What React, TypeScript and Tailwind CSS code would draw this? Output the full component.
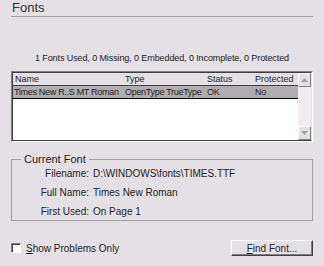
import * as React from 'react';

const rows = [
    { name: 'Times New R..S MT Roman', type: 'OpenType TrueType', status: 'OK', prot: 'No' },
];

function Arrow({ up }: { up?: boolean }) {
    return (
        <svg width="7" height="4" viewBox="0 0 7 4">
            <path d={up ? 'M3.5 0 L7 4 L0 4 Z' : 'M0 0 L7 0 L3.5 4 Z'} fill="#a0a0a0" />
        </svg>
    );
}

function ScrollButton({ up }: { up?: boolean }) {
    return (
        <div className="flex h-[14px] w-[13px] items-center justify-center border border-t-white border-l-white border-r-[#808080] border-b-[#808080] bg-[#e5e0e5]">
            <Arrow up={up} />
        </div>
    );
}

export default function App() {
    return (
        <div className="h-[266px] w-[324px] bg-[#e5e0e5] px-[11px] font-['Liberation_Sans',sans-serif] text-[11px] leading-[13px] text-[#222]">
            <div className="border-b border-[#a0a0a0] pt-[2px] pb-[2px] pl-[1px] text-[13px] leading-[12px] text-[#333]">Fonts</div>

            <div className="mt-[35px] text-center text-[9px] leading-[13px] tracking-[-0.1px]">
                1 Fonts Used, 0 Missing, 0 Embedded, 0 Incomplete, 0 Protected
            </div>

            <div className="mt-[6px] flex h-[71px] border border-t-[#808080] border-l-[#808080] border-r-white border-b-white">
                <div className="flex flex-1 border border-t-[#404040] border-l-[#404040] border-r-[#e5e0e5] border-b-[#404040]">
                    <div className="flex flex-1 flex-col bg-white">
                        <div className="flex h-[13px] items-center border-b border-[#404040] bg-[#e5e0e5] text-[9px]">
                            <span className="w-[112px] pl-[2px]">Name</span>
                            <span className="w-[82px]">Type</span>
                            <span className="w-[48px]">Status</span>
                            <span>Protected</span>
                        </div>
                        {rows.map((r, i) => (
                            <div key={i} className="flex h-[13px] items-center border-b border-black bg-[#b0acb0] text-[9px] tracking-[-0.3px]">
                                <span className="w-[112px] overflow-hidden whitespace-nowrap pl-[1px] pr-[3px]">{r.name}</span>
                                <span className="w-[82px] overflow-hidden whitespace-nowrap pr-[3px]">{r.type}</span>
                                <span className="w-[48px]">{r.status}</span>
                                <span>{r.prot}</span>
                            </div>
                        ))}
                    </div>
                    <div className="flex w-[13px] flex-col justify-between bg-[#efebef]">
                        <ScrollButton up />
                        <ScrollButton />
                    </div>
                </div>
            </div>

            <fieldset className="mt-[11px] h-[68px] border border-[#a0a0a0] pl-[9px]">
                <legend className="px-[3px] text-[11px] leading-[12px]">Current Font</legend>
                <div className="mt-[2px] grid grid-cols-[68px_1fr] gap-x-[4px] gap-y-[6px] text-[10px] leading-[13px]">
                    <span className="text-right">Filename:</span>
                    <span>D:\WINDOWS\fonts\TIMES.TTF</span>
                    <span className="text-right">Full Name:</span>
                    <span>Times New Roman</span>
                    <span className="text-right">First Used:</span>
                    <span>On Page 1</span>
                </div>
            </fieldset>

            <div className="mt-[19px] flex items-center justify-between">
                <label className="flex items-center gap-[5px] text-[10px]">
                    <span className="h-[10px] w-[10px] border border-t-[#808080] border-l-[#808080] border-r-white border-b-white bg-white shadow-[inset_1px_1px_0_#404040]" />
                    <span><u>S</u>how Problems Only</span>
                </label>
                <button className="h-[16px] w-[82px] border border-t-white border-l-white border-r-[#404040] border-b-[#404040] bg-[#e5e0e5] text-[10px] leading-[13px] shadow-[inset_-1px_-1px_0_#808080]">
                    <u>F</u>ind Font...
                </button>
            </div>
        </div>
    );
}
